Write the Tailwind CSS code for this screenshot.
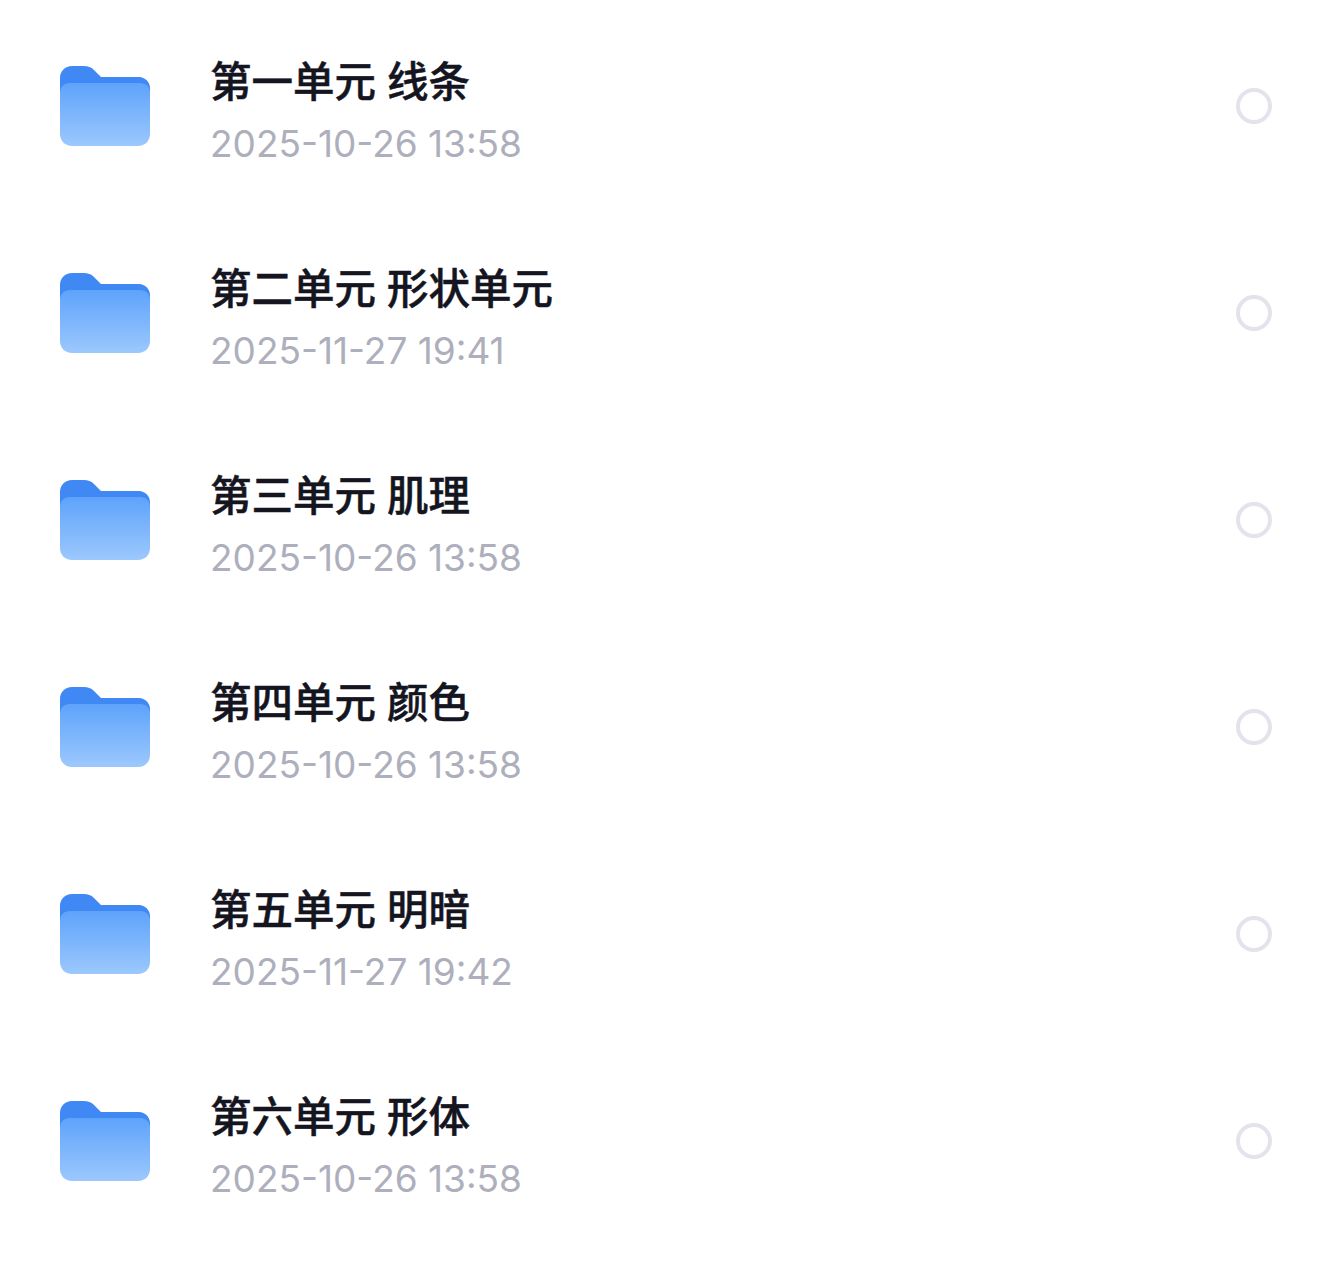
<!DOCTYPE html>
<html lang="zh">
<head>
<meta charset="utf-8">
<title>单元列表</title>
<script src="https://cdn.jsdelivr.net/npm/@tailwindcss/browser@4"></script>
</head>
<body class="bg-white font-['Inter','Noto_Sans_CJK_SC',sans-serif]">
<svg width="0" height="0" class="absolute">
  <defs>
    <linearGradient id="folderFront" x1="0" y1="0" x2="0" y2="1">
      <stop offset="0" stop-color="#5ea3fb"/>
      <stop offset="1" stop-color="#9cc8fd"/>
    </linearGradient>
    <symbol id="folder" viewBox="0 0 90 80">
      <path d="M0 12C0 5 5 0 12 0H24C28 0 31 1 34 4L41 11H79C85 11 90 16 90 22V40H0Z" fill="#4089f4"/>
      <path d="M0 27C0 21 4 17 10 17H80C86 17 90 21 90 27V68C90 75 85 80 78 80H12C5 80 0 75 0 68Z" fill="url(#folderFront)"/>
    </symbol>
  </defs>
</svg>
<div class="w-[1320px] h-[1263px] overflow-hidden pt-[2px]">

  <!-- 第一单元 -->
  <div class="h-[207px] flex items-center pl-[60px] pr-[48px]">
    <svg class="w-[90px] h-[80px] shrink-0"><use href="#folder"/></svg>
    <div class="ml-[60px] pt-[14px] flex-1">
      <div class="text-[41.5px] leading-[62px] font-medium [-webkit-text-stroke:0.5px_#14151f] text-[#14151f]">第一单元 线条</div>
      <div class="text-[37px] leading-[62px] text-[#aeafbc]">2025-10-26 13:58</div>
    </div>
    <div class="w-[36px] h-[36px] mt-[1px] rounded-full border-[4px] border-[#e3e3ec]"></div>
  </div>

  <!-- 第二单元 -->
  <div class="h-[207px] flex items-center pl-[60px] pr-[48px]">
    <svg class="w-[90px] h-[80px] shrink-0"><use href="#folder"/></svg>
    <div class="ml-[60px] pt-[14px] flex-1">
      <div class="text-[41.5px] leading-[62px] font-medium [-webkit-text-stroke:0.5px_#14151f] text-[#14151f]">第二单元 形状单元</div>
      <div class="text-[37px] leading-[62px] text-[#aeafbc]">2025-11-27 19:41</div>
    </div>
    <div class="w-[36px] h-[36px] mt-[1px] rounded-full border-[4px] border-[#e3e3ec]"></div>
  </div>

  <!-- 第三单元 -->
  <div class="h-[207px] flex items-center pl-[60px] pr-[48px]">
    <svg class="w-[90px] h-[80px] shrink-0"><use href="#folder"/></svg>
    <div class="ml-[60px] pt-[14px] flex-1">
      <div class="text-[41.5px] leading-[62px] font-medium [-webkit-text-stroke:0.5px_#14151f] text-[#14151f]">第三单元 肌理</div>
      <div class="text-[37px] leading-[62px] text-[#aeafbc]">2025-10-26 13:58</div>
    </div>
    <div class="w-[36px] h-[36px] mt-[1px] rounded-full border-[4px] border-[#e3e3ec]"></div>
  </div>

  <!-- 第四单元 -->
  <div class="h-[207px] flex items-center pl-[60px] pr-[48px]">
    <svg class="w-[90px] h-[80px] shrink-0"><use href="#folder"/></svg>
    <div class="ml-[60px] pt-[14px] flex-1">
      <div class="text-[41.5px] leading-[62px] font-medium [-webkit-text-stroke:0.5px_#14151f] text-[#14151f]">第四单元 颜色</div>
      <div class="text-[37px] leading-[62px] text-[#aeafbc]">2025-10-26 13:58</div>
    </div>
    <div class="w-[36px] h-[36px] mt-[1px] rounded-full border-[4px] border-[#e3e3ec]"></div>
  </div>

  <!-- 第五单元 -->
  <div class="h-[207px] flex items-center pl-[60px] pr-[48px]">
    <svg class="w-[90px] h-[80px] shrink-0"><use href="#folder"/></svg>
    <div class="ml-[60px] pt-[14px] flex-1">
      <div class="text-[41.5px] leading-[62px] font-medium [-webkit-text-stroke:0.5px_#14151f] text-[#14151f]">第五单元 明暗</div>
      <div class="text-[37px] leading-[62px] text-[#aeafbc]">2025-11-27 19:42</div>
    </div>
    <div class="w-[36px] h-[36px] mt-[1px] rounded-full border-[4px] border-[#e3e3ec]"></div>
  </div>

  <!-- 第六单元 -->
  <div class="h-[207px] flex items-center pl-[60px] pr-[48px]">
    <svg class="w-[90px] h-[80px] shrink-0"><use href="#folder"/></svg>
    <div class="ml-[60px] pt-[14px] flex-1">
      <div class="text-[41.5px] leading-[62px] font-medium [-webkit-text-stroke:0.5px_#14151f] text-[#14151f]">第六单元 形体</div>
      <div class="text-[37px] leading-[62px] text-[#aeafbc]">2025-10-26 13:58</div>
    </div>
    <div class="w-[36px] h-[36px] mt-[1px] rounded-full border-[4px] border-[#e3e3ec]"></div>
  </div>

</div>
</body>
</html>
